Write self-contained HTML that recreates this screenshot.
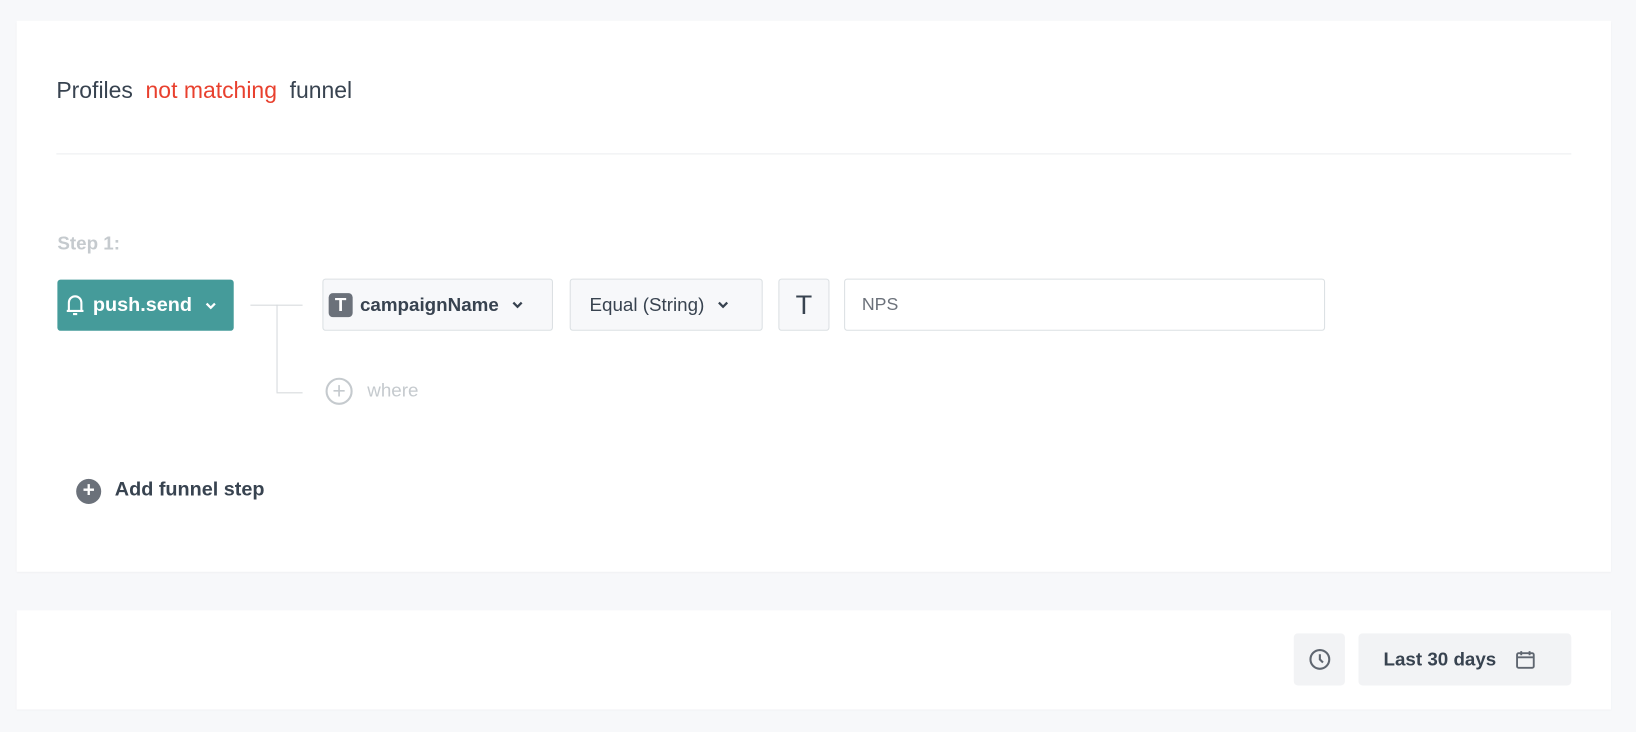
<!DOCTYPE html>
<html><head><style>
*{box-sizing:border-box;margin:0;padding:0}
body{width:1636px;height:732px;background:#f7f8fa;font-family:"Liberation Sans",sans-serif;position:relative;overflow:hidden;color:#384350}
#w{position:absolute;left:0;top:0;width:1568px;height:702px;transform:scale(1.04337);transform-origin:0 0}
.card{position:absolute;background:#fff;left:16px;width:1528px;box-shadow:0 1px 2px rgba(0,0,0,.04)}
.abs{position:absolute}
.btn{position:absolute;border:1px solid #dbe0e3;border-radius:3px;background:#f7f8fa;height:50px;display:flex;align-items:center;font-size:18px;font-weight:bold;color:#384350}
</style></head><body><div id="w">
<div class="card" style="top:20px;height:528px">
<div class="abs" style="left:38px;top:54px;font-size:22px">Profiles <span style="color:#e8402e;margin:0 6px">not matching</span> funnel</div>
<div class="abs" style="left:38px;top:127px;width:1452px;height:1px;background:#eceef0"></div>
<div class="abs" style="left:39px;top:203px;font-size:18px;font-weight:bold;color:#c5cace">Step 1:</div>
<div class="abs" style="left:39px;top:248px;width:169px;height:49px;background:#459b9a;border-radius:3px;color:#fff;font-size:19px;font-weight:bold;display:flex;align-items:center;padding-left:8px">
<svg width="18" height="22" viewBox="0 0 18 22" fill="none" stroke="#fff" stroke-width="2"><path d="M3 16V8a6 6 0 0 1 12 0v8zM1 16h16M7 19h4"/></svg>
<span style="margin-left:8px">push.send</span>
<svg style="margin-left:12px" width="12" height="8" viewBox="0 0 12 8" fill="none" stroke="#fff" stroke-width="2.2"><path d="M2 2l4 4 4-4"/></svg></div>
<div class="abs" style="left:224px;top:272px;width:50px;height:1px;background:#d5d9dc"></div>
<div class="abs" style="left:249px;top:272px;width:1px;height:84px;background:#d5d9dc"></div>
<div class="abs" style="left:249px;top:356px;width:25px;height:1px;background:#d5d9dc"></div>
<div class="btn" style="left:293px;top:247px;width:221px;padding-left:5px"><span style="width:23px;height:23px;background:#6b717a;border-radius:4px;color:#fff;display:inline-flex;align-items:center;justify-content:center;font-size:18px">T</span><span style="margin-left:7px">campaignName</span>
<svg style="margin-left:12px" width="12" height="8" viewBox="0 0 12 8" fill="none" stroke="#384350" stroke-width="2.2"><path d="M2 2l4 4 4-4"/></svg></div>
<div class="btn" style="left:530px;top:247px;width:185px;padding-left:18px;font-weight:normal">Equal (String)<svg style="margin-left:12px" width="12" height="8" viewBox="0 0 12 8" fill="none" stroke="#384350" stroke-width="2.2"><path d="M2 2l4 4 4-4"/></svg></div>
<div class="btn" style="left:730px;top:247px;width:49px;justify-content:center;font-size:26px;font-weight:normal">T</div>
<div class="btn" style="left:793px;top:247px;width:461px;background:#fff;padding-left:16px;font-weight:normal;font-size:17px;color:#6b717a">NPS</div>
<div class="abs" style="left:296px;top:342px;width:26px;height:26px;border:2px solid #c5cace;border-radius:50%;color:#c5cace;text-align:center;line-height:21px;font-size:22px">+</div>
<div class="abs" style="left:336px;top:344px;font-size:18px;color:#c5cace">where</div>
<div class="abs" style="left:57px;top:439px;width:24px;height:24px;background:#6b717a;border-radius:50%;color:#fff;text-align:center;line-height:23px;font-size:20px;font-weight:bold">+</div>
<div class="abs" style="left:94px;top:439px;font-size:19px;font-weight:bold">Add funnel step</div>
</div>
<div class="card" style="top:585px;height:95px">
<div class="abs" style="left:1224px;top:22px;width:49px;height:50px;background:#f2f3f5;border-radius:4px;display:flex;align-items:center;justify-content:center"><svg width="22" height="22" viewBox="0 0 22 22" fill="none" stroke="#5f6670" stroke-width="2"><circle cx="11" cy="11" r="9"/><path d="M11 6v5l3 3"/></svg></div>
<div class="abs" style="left:1286px;top:22px;width:204px;height:50px;background:#f2f3f5;border-radius:4px;display:flex;align-items:center;padding-left:24px;font-size:18px;font-weight:bold">Last 30 days<svg style="margin-left:18px" width="20" height="20" viewBox="0 0 20 20" fill="none" stroke="#5f6670" stroke-width="1.8"><rect x="2" y="4" width="16" height="14" rx="1.5"/><path d="M2 8h16M6 2v4M14 2v4"/></svg></div>
</div>
</div></body></html>
